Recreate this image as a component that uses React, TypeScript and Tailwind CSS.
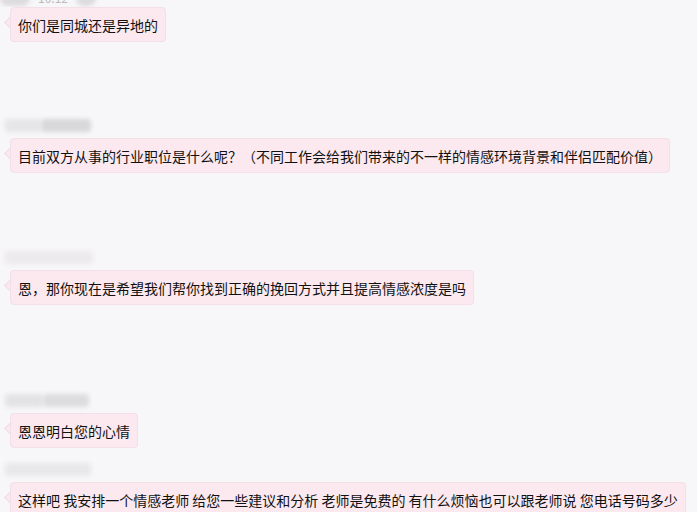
import React from "react";

type Msg = {
  text: string;
  gap: string;
  blobs: { w: string; c: string }[];
};

const messages: Msg[] = [
  {
    text: "目前双方从事的行业职位是什么呢？（不同工作会给我们带来的不一样的情感环境背景和伴侣匹配价值）",
    gap: "mt-[76px]",
    blobs: [
      { w: "w-[36px]", c: "bg-[#e6e5e8]" },
      { w: "w-[50px]", c: "bg-[#d8d7da]" },
    ],
  },
  {
    text: "恩，那你现在是希望我们帮你找到正确的挽回方式并且提高情感浓度是吗",
    gap: "mt-[77px]",
    blobs: [{ w: "w-[88px]", c: "bg-[#eceaed]" }],
  },
  {
    text: "恩恩明白您的心情",
    gap: "mt-[88px]",
    blobs: [
      { w: "w-[38px]", c: "bg-[#e3e2e5]" },
      { w: "w-[46px]", c: "bg-[#dddcdf]" },
    ],
  },
  {
    text: "这样吧 我安排一个情感老师 给您一些建议和分析 老师是免费的 有什么烦恼也可以跟老师说 您电话号码多少",
    gap: "mt-[14px]",
    blobs: [{ w: "w-[86px]", c: "bg-[#e8e7ea]" }],
  },
];

function Bubble({ text }: { text: string }) {
  return (
    <div className="relative self-start ml-[10px]">
      {/* tail */}
      <div className="absolute left-[-4px] top-[11px] w-[9px] h-[9px] rotate-45 bg-[#fbe9ef] border-l border-b border-[#f1dce3]" />
      <div className="relative h-[35px] flex items-center px-[7px] rounded-[4px] bg-[#fbe9ef] border border-[#f3dfe6] text-[14px] leading-[20px] text-[#111] whitespace-nowrap">
        {text}
      </div>
    </div>
  );
}

function NameBlob({ blobs }: { blobs: Msg["blobs"] }) {
  return (
    <div className="h-[20px] flex items-start pt-[1px] pl-[5px]">
      {blobs.map((b, i) => (
        <div key={i} className={`${b.w} h-[13px] ${b.c} blur-[2px] rounded-[4px]`} />
      ))}
    </div>
  );
}

export default function App() {
  return (
    <div
      className="w-[697px] h-[512px] overflow-hidden bg-[#f7f6f8] flex flex-col"
      style={{ fontFamily: '"Noto Sans CJK SC", "Noto Sans", sans-serif' }}
    >
      {/* timestamp row, mostly scrolled out of view */}
      <div className="h-[7px] overflow-hidden relative shrink-0">
        <div className="flex items-center gap-[8px] -mt-[10px]">
          <div className="w-[30px] h-[16px] rounded-full bg-[#dcdbde] blur-[2px]" />
          <span className="text-[12px] text-[#bbb] leading-[16px]">10:12</span>
          <div className="w-[20px] h-[16px] rounded-full bg-[#dcdbde] blur-[2px]" />
        </div>
      </div>

      <Bubble text="你们是同城还是异地的" />

      {messages.map((m, i) => (
        <div key={i} className={`${m.gap} flex flex-col shrink-0`}>
          <NameBlob blobs={m.blobs} />
          <Bubble text={m.text} />
        </div>
      ))}
    </div>
  );
}
